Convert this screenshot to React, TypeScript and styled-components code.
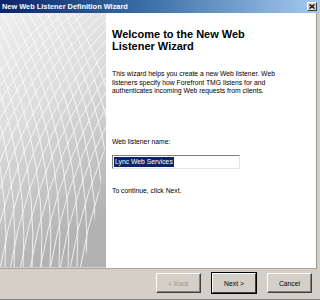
import React from 'react';
import styled, { createGlobalStyle } from 'styled-components';

const GlobalStyle = createGlobalStyle`
  html, body {
    margin: 0;
    padding: 0;
    background: #d4d0c8;
  }
`;

const Window = styled.div`
  width: 320px;
  height: 300px;
  display: flex;
  flex-direction: column;
  background: #d4d0c8;
  font-family: 'Liberation Sans', Arial, sans-serif;
  color: #000;
  overflow: hidden;
`;

const TitleBar = styled.div`
  height: 13px;
  flex: none;
  display: flex;
  align-items: center;
  justify-content: space-between;
  padding: 0 3px 0 2px;
  background: linear-gradient(to right, #0a246a 0%, #3a6ea5 45%, #a6caf0 100%);
`;

const Title = styled.span`
  color: #fff;
  font-weight: bold;
  font-size: 7.4px;
  white-space: nowrap;
`;

const CloseButton = styled.div`
  width: 10px;
  height: 9px;
  display: flex;
  align-items: center;
  justify-content: center;
  background: #d4d0c8;
  border: 1px solid;
  border-color: #fff #404040 #404040 #fff;
  box-sizing: border-box;
`;

const Body = styled.div`
  height: 255px;
  flex: none;
  display: flex;
  margin-right: 3px;
  border-right: 1px solid #9a9890;
  border-bottom: 1px solid #a8a69e;
`;

const SidePanel = styled.div`
  width: 106px;
  flex: none;
  display: flex;
`;

const Main = styled.div`
  flex: 1;
  background: #fff;
  padding: 15px 6px 0 6px;
  display: flex;
  flex-direction: column;
`;

const Heading = styled.h1`
  margin: 0;
  font-size: 11px;
  line-height: 12px;
  font-weight: bold;
`;

const Text = styled.p<{ $top: number }>`
  margin: ${(p) => p.$top}px 0 0 0;
  max-width: 168px;
  font-size: 6.8px;
  line-height: 8.5px;
`;

const NameInput = styled.div`
  margin-top: 9px;
  width: 128px;
  height: 14px;
  box-sizing: border-box;
  border: 1px solid;
  border-color: #7f7d77 #e8e6e0 #e8e6e0 #7f7d77;
  background: #fff;
  padding: 1px;
  display: flex;
`;

const Selected = styled.span`
  background: #0a246a;
  color: #fff;
  font-size: 6.8px;
  line-height: 10px;
  padding: 0 1px;
`;

const Footer = styled.div`
  flex: 1;
  display: flex;
  justify-content: flex-end;
  align-items: center;
  gap: 11px;
  padding: 0 8px 2px 0;
  border-bottom: 1px solid #808080;
`;

const Button = styled.button<{ $default?: boolean; $disabled?: boolean }>`
  width: ${(p) => (p.$default ? 44 : 45)}px;
  height: 20px;
  box-sizing: border-box;
  padding: 0;
  background: #d4d0c8;
  font-family: 'Liberation Sans', Arial, sans-serif;
  font-size: 6.8px;
  color: ${(p) => (p.$disabled ? '#a09c94' : '#000')};
  border: 1px solid;
  border-color: #fff #404040 #404040 #fff;
  box-shadow: ${(p) => (p.$default ? '0 0 0 1px #000' : 'inset -1px -1px 0 #808080')};
`;

const meshA = Array.from({ length: 20 }, (_, i) => {
  const x0 = -80 + i * 10;
  return `M${x0} 256 Q${x0 + 28} 90 ${x0 + 140} -6`;
});

const meshB = Array.from({ length: 20 }, (_, i) => {
  const x0 = -40 + i * 9;
  return `M${x0} 256 Q${x0 + 8} 120 ${x0 - 60} -6`;
});

function Mesh() {
  return (
    <svg width="106" height="254" viewBox="0 0 106 254">
      <defs>
        <linearGradient id="bg" x1="0" y1="0" x2="0.3" y2="1">
          <stop offset="0" stopColor="#eeeeee" />
          <stop offset="0.45" stopColor="#dcdcdc" />
          <stop offset="1" stopColor="#b2b2b2" />
        </linearGradient>
        <clipPath id="edge">
          <path d="M0 0 H106 V120 Q100 200 82 254 H0 Z" />
        </clipPath>
      </defs>
      <rect width="106" height="254" fill="url(#bg)" />
      <g clipPath="url(#edge)" fill="none" stroke="#fff" strokeWidth="0.9" opacity="0.85">
        {meshA.map((d) => (
          <path key={d} d={d} />
        ))}
        {meshB.map((d) => (
          <path key={d} d={d} />
        ))}
      </g>
    </svg>
  );
}

export default function App() {
  return (
    <>
      <GlobalStyle />
      <Window>
        <TitleBar>
          <Title>New Web Listener Definition Wizard</Title>
          <CloseButton>
            <svg width="6" height="5" viewBox="0 0 6 5">
              <path d="M0.5 0.5 L5.5 4.5 M5.5 0.5 L0.5 4.5" stroke="#000" strokeWidth="1.2" />
            </svg>
          </CloseButton>
        </TitleBar>
        <Body>
          <SidePanel>
            <Mesh />
          </SidePanel>
          <Main>
            <Heading>
              Welcome to the New Web
              <br />
              Listener Wizard
            </Heading>
            <Text $top={18}>
              This wizard helps you create a new Web listener. Web listeners specify how Forefront TMG
              listens for and authenticates incoming Web requests from clients.
            </Text>
            <Text $top={42}>Web listener name:</Text>
            <NameInput>
              <Selected>Lync Web Services</Selected>
            </NameInput>
            <Text $top={18}>To continue, click Next.</Text>
          </Main>
        </Body>
        <Footer>
          <Button $disabled>&lt; Back</Button>
          <Button $default>Next &gt;</Button>
          <Button>Cancel</Button>
        </Footer>
      </Window>
    </>
  );
}
